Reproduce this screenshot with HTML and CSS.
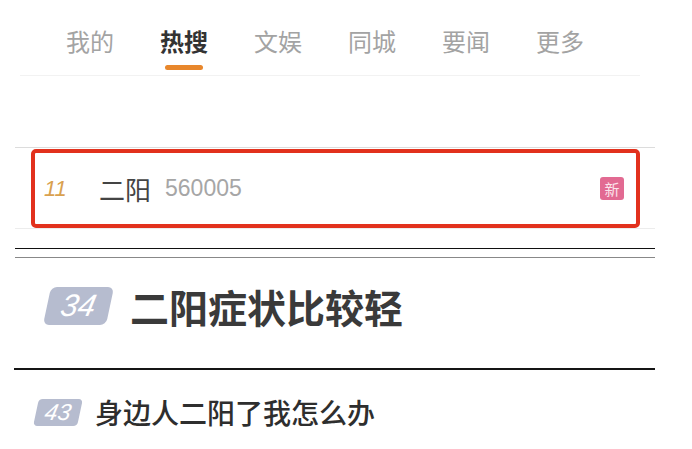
FILE: index.html
```html
<!DOCTYPE html>
<html lang="zh-CN">
<head>
  <meta charset="UTF-8" />
  <meta name="viewport" content="width=device-width, initial-scale=1.0"/>
  <title>热搜</title>
  <link rel="stylesheet" href="styles.css">
</head>
<body>
  <div class="tabs">
    <div class="tab">我的</div>
    <div class="tab active">热搜</div>
    <div class="tab">文娱</div>
    <div class="tab">同城</div>
    <div class="tab">要闻</div>
    <div class="tab">更多</div>
  </div>

  <div class="hot-list">
    <div class="hot-row">
      <span class="rank">11</span>
      <span class="title">二阳</span>
      <span class="count">560005</span>
      <span class="tag-new">新</span>
    </div>
  </div>

  <div class="double-rule"></div>

  <div class="big-row">
    <span class="badge big">34</span>
    <span class="big-title">二阳症状比较轻</span>
  </div>

  <div class="rule"></div>

  <div class="small-row">
    <span class="badge small">43</span>
    <span class="small-title">身边人二阳了我怎么办</span>
  </div>
</body>
</html>
```

FILE: styles.css
```css
body {
  margin: 0;
  padding: 0;
  background: #fff;
  color: #333;
  font-family: "Noto Sans CJK SC", "Liberation Sans", sans-serif;
}

.tabs {
  display: flex;
  gap: 46px;
  margin: 0 52px 0 20px;
  padding: 24px 0 0 46px;
  height: 51px;
  border-bottom: 1px solid #f2f2f2;
}

.tab {
  display: flex;
  flex-direction: column;
  align-items: center;
  font-size: 24px;
  line-height: 34px;
  color: #a3a3a3;
}

.tab.active {
  color: #333;
  font-weight: bold;
}

.tab.active::after {
  content: "";
  width: 38px;
  height: 5px;
  margin-top: 7px;
  border-radius: 3px;
  background: #e8872c;
}

.hot-list {
  margin: 71px 37px 0 15px;
  border-top: 1px solid #dcdcdc;
  border-bottom: 1px solid #ececec;
  padding: 1px 15px 0 16px;
}

.hot-row {
  display: flex;
  align-items: center;
  height: 71px;
  border: 4px solid #e2311d;
  border-radius: 5px;
  padding: 0 12px 0 9px;
}

.rank {
  font-family: "Liberation Sans", sans-serif;
  font-style: italic;
  font-size: 22px;
  color: #d9a14f;
  width: 55px;
}

.title {
  font-size: 26px;
  color: #444;
  margin-right: 14px;
}

.count {
  font-family: "Liberation Sans", sans-serif;
  font-size: 23px;
  color: #a6a6a6;
}

.tag-new {
  margin-left: auto;
  width: 24px;
  height: 23px;
  border-radius: 3px;
  background: #e26a92;
  color: #fbe3ea;
  font-size: 15px;
  line-height: 23px;
  text-align: center;
}

.double-rule {
  margin: 19px 37px 0 15px;
  height: 8px;
  border-top: 1px solid #111;
  border-bottom: 1px solid #888;
}

.big-row {
  display: flex;
  align-items: center;
  gap: 20px;
  padding: 12px 0 0 47px;
  height: 72px;
}

.badge {
  font-family: "Liberation Sans", sans-serif;
  font-style: italic;
  color: #fff;
  background: #b6bccf;
  transform: skewX(-12deg);
  text-align: center;
}

.badge.big {
  width: 63px;
  height: 38px;
  line-height: 38px;
  font-size: 31px;
  border-radius: 6px;
}

.big-title {
  font-size: 39px;
  font-weight: bold;
  color: #3a3a3a;
}

.rule {
  margin: 26px 37px 0 14px;
  height: 0;
  border-top: 2px solid #151515;
}

.small-row {
  display: flex;
  align-items: center;
  gap: 15px;
  padding: 22px 0 0 36px;
}

.badge.small {
  width: 44px;
  height: 27px;
  line-height: 27px;
  font-size: 23px;
  border-radius: 4px;
}

.small-title {
  font-size: 28px;
  font-weight: 500;
  color: #2e2e2e;
}
```
